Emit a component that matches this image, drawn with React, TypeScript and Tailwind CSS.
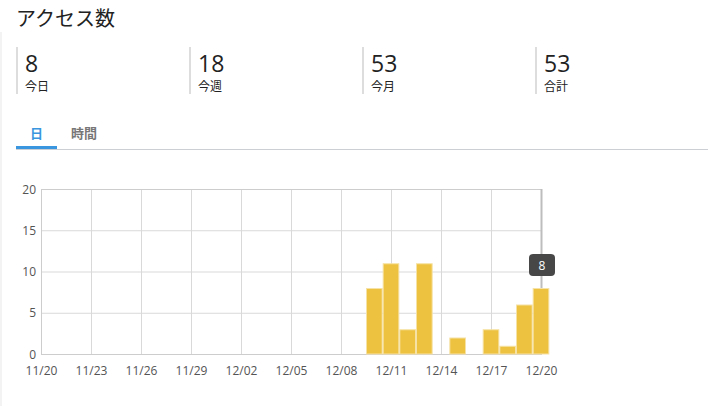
import { useState } from "react";

const stats = [
  { value: "8", label: "今日" },
  { value: "18", label: "今週" },
  { value: "53", label: "今月" },
  { value: "53", label: "合計" },
];

// 11/20 .. 12/20
const start = new Date(2020, 10, 20);
const counts: Record<number, number> = {
  20: 8,
  21: 11,
  22: 3,
  23: 11,
  25: 2,
  27: 3,
  28: 1,
  29: 6,
  30: 8,
};

const days = Array.from({ length: 31 }, (_, i) => {
  const d = new Date(start);
  d.setDate(start.getDate() + i);
  const label =
    String(d.getMonth() + 1).padStart(2, "0") +
    "/" +
    String(d.getDate()).padStart(2, "0");
  return { label, value: counts[i] ?? 0 };
});

const LEFT = 39;
const RIGHT = 539;
const TOP = 39;
const BOTTOM = 204;
const dayW = (RIGHT - LEFT) / 30;
const unitH = (BOTTOM - TOP) / 20;

function AccessChart() {
  const hover = 30;
  const hv = days[hover].value;
  return (
    <svg width={720} height={256} className="block">
      {/* grid */}
      {[5, 10, 15].map((v) => (
        <line
          key={v}
          x1={LEFT}
          x2={RIGHT}
          y1={BOTTOM - v * unitH + 0.5}
          y2={BOTTOM - v * unitH + 0.5}
          stroke="#d9d9d9"
        />
      ))}
      {Array.from({ length: 9 }, (_, k) => (k + 1) * 3).map((i) => (
        <line
          key={i}
          x1={Math.round(LEFT + i * dayW) + 0.5}
          x2={Math.round(LEFT + i * dayW) + 0.5}
          y1={TOP}
          y2={BOTTOM}
          stroke="#d9d9d9"
        />
      ))}
      <rect
        x={LEFT + 0.5}
        y={TOP + 0.5}
        width={RIGHT - LEFT}
        height={BOTTOM - TOP}
        fill="none"
        stroke="#cdcdcd"
      />

      {/* y labels */}
      {[0, 5, 10, 15, 20].map((v) => (
        <text
          key={v}
          x={34}
          y={BOTTOM - v * unitH + 4.5}
          textAnchor="end"
          fontSize={12}
          fill="#545454"
        >
          {v}
        </text>
      ))}

      {/* x labels */}
      {days.map((d, i) =>
        i % 3 === 0 ? (
          <text
            key={d.label}
            x={LEFT + i * dayW + 0.5}
            y={225}
            textAnchor="middle"
            fontSize={12}
            fill="#545454"
          >
            {d.label}
          </text>
        ) : null,
      )}

      {/* hover line */}
      <line
        x1={RIGHT + 0.5}
        x2={RIGHT + 0.5}
        y1={TOP}
        y2={BOTTOM - hv * unitH}
        stroke="#bdbdbd"
        strokeWidth={2}
      />

      {/* bars */}
      {days.map((d, i) =>
        d.value > 0 ? (
          <rect
            key={d.label}
            x={LEFT + i * dayW - dayW / 2 + 0.5}
            y={BOTTOM - d.value * unitH + 0.5}
            width={dayW - 1}
            height={d.value * unitH - 0.5}
            fill="#edc240"
            stroke="#f6e2a4"
            strokeWidth={1}
          />
        ) : null,
      )}

      {/* tooltip */}
      <rect x={527} y={104} width={26} height={22} rx={4} fill="#474747" />
      <text x={540} y={119.5} textAnchor="middle" fontSize={12} fill="#ffffff">
        {hv}
      </text>
    </svg>
  );
}

export default function App() {
  const [tab, setTab] = useState("day");

  return (
    <main className="h-[406px] w-[722px] overflow-hidden bg-white font-['Open_Sans','Noto_Sans_CJK_JP',sans-serif] text-[#222]">
      <h1 className="pl-4 pt-1 text-[20px] leading-7 font-normal font-['Noto_Sans_CJK_JP','Open_Sans',sans-serif]">
        アクセス数
      </h1>

      <div className="border-l-2 border-[#f3f3f3] pt-[15px]">
        <div className="px-[14px]">
          <div className="grid grid-cols-4">
            {stats.map((s) => (
              <div
                key={s.label}
                className="flex h-[47px] flex-col border-l-2 border-[#dddddd] pl-[7px] pt-px"
              >
                <span className="text-[23px] leading-[31px] text-[#222]">
                  {s.value}
                </span>
                <span className="text-[12px] leading-[15px] text-[#222]">
                  {s.label}
                </span>
              </div>
            ))}
          </div>

          <div className="mt-6 flex border-b border-[#ccd0d4]">
            <button
              type="button"
              onClick={() => setTab("day")}
              className={
                tab === "day"
                  ? "border-b-[3px] border-[#3a96de] px-[14px] pt-[5px] pb-[3px] text-[13px] leading-5 font-bold text-[#3a96de]"
                  : "border-b-[3px] border-transparent px-[14px] pt-[5px] pb-[3px] text-[13px] leading-5 font-bold text-[#777]"
              }
            >
              日
            </button>
            <button
              type="button"
              onClick={() => setTab("hour")}
              className={
                tab === "hour"
                  ? "border-b-[3px] border-[#3a96de] px-[14px] pt-[5px] pb-[3px] text-[13px] leading-5 font-bold text-[#3a96de]"
                  : "border-b-[3px] border-transparent px-[14px] pt-[5px] pb-[3px] text-[13px] leading-5 font-bold text-[#777]"
              }
            >
              時間
            </button>
          </div>
        </div>

        <AccessChart />
      </div>
    </main>
  );
}
